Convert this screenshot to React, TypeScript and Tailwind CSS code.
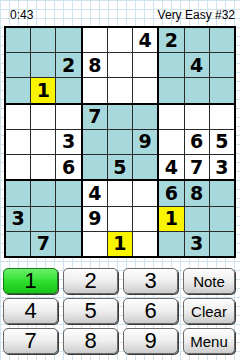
import React from "react";

const board: string[] = [
  ".....42..",
  "..28...4.",
  ".1.......",
  "...7.....",
  "..3..9.65",
  "..6.5.473",
  "...4..68.",
  "3..9..1..",
  ".7..1..3.",
];

const yellow = new Set(["2-1", "7-6", "8-4"]);

function Cell({ r, c }: { r: number; c: number }) {
  const ch = board[r][c];
  const boxR = Math.floor(r / 3);
  const boxC = Math.floor(c / 3);
  const teal = (boxR + boxC) % 2 === 0;
  const isYellow = yellow.has(`${r}-${c}`);
  const bg = isYellow ? "bg-[#f9f400]" : teal ? "bg-[#a7d9dc]" : "bg-white";
  return (
    <div
      className={`${bg} flex items-center justify-center font-['DejaVu_Sans',Verdana,sans-serif] text-[19px] font-bold text-black leading-none`}
    >
      {ch === "." ? "" : ch}
    </div>
  );
}

function Box({ br, bc }: { br: number; bc: number }) {
  const cells = [];
  for (let i = 0; i < 3; i++) {
    for (let j = 0; j < 3; j++) {
      cells.push(<Cell key={`${i}-${j}`} r={br * 3 + i} c={bc * 3 + j} />);
    }
  }
  return <div className="grid grid-cols-3 grid-rows-3 gap-px bg-[#2a2a2a]">{cells}</div>;
}

function Btn({ label, green, small }: { label: string; green?: boolean; small?: boolean }) {
  const base = green
    ? "bg-gradient-to-b from-[#6af06a] via-[#2ee02e] to-[#18c418] border-[#1a7a1a]"
    : "bg-gradient-to-b from-[#fdfdfd] via-[#eeeeee] to-[#cdcdcd] border-[#6a6a6a]";
  const size = small ? "text-[15px]" : "text-[22px]";
  return (
    <div
      className={`${base} ${size} h-[26px] rounded-[5px] border flex items-center justify-center text-black shadow-[1px_1px_0_#3a3a3a] font-['Liberation_Sans',Arial,sans-serif] leading-none`}
    >
      {label}
    </div>
  );
}

export default function App() {
  const boxes = [];
  for (let i = 0; i < 3; i++) for (let j = 0; j < 3; j++) boxes.push(<Box key={`${i}${j}`} br={i} bc={j} />);
  return (
    <div className="w-[240px] h-[360px] overflow-hidden bg-white bg-[linear-gradient(to_right,#cfe4ee_1px,transparent_1px),linear-gradient(to_bottom,#cfe4ee_1px,transparent_1px)] bg-[size:9px_9px]">
      <div className="h-[26px] flex justify-between pl-[10px] pr-[5px] pt-[8px] text-[12px] leading-[14px] text-black font-['Liberation_Sans',Arial,sans-serif]">
        <span>0:43</span>
        <span>Very Easy #32</span>
      </div>
      <div className="ml-[4px] w-[232px] h-[232px] bg-black p-[2px] grid grid-cols-3 grid-rows-3 gap-[2px]">
        {boxes}
      </div>
      <div className="mt-[10px] pl-[3px] grid grid-cols-[55px_55px_55px_52px] gap-x-[5px] gap-y-[4px]">
        <Btn label="1" green />
        <Btn label="2" />
        <Btn label="3" />
        <Btn label="Note" small />
        <Btn label="4" />
        <Btn label="5" />
        <Btn label="6" />
        <Btn label="Clear" small />
        <Btn label="7" />
        <Btn label="8" />
        <Btn label="9" />
        <Btn label="Menu" small />
      </div>
    </div>
  );
}
